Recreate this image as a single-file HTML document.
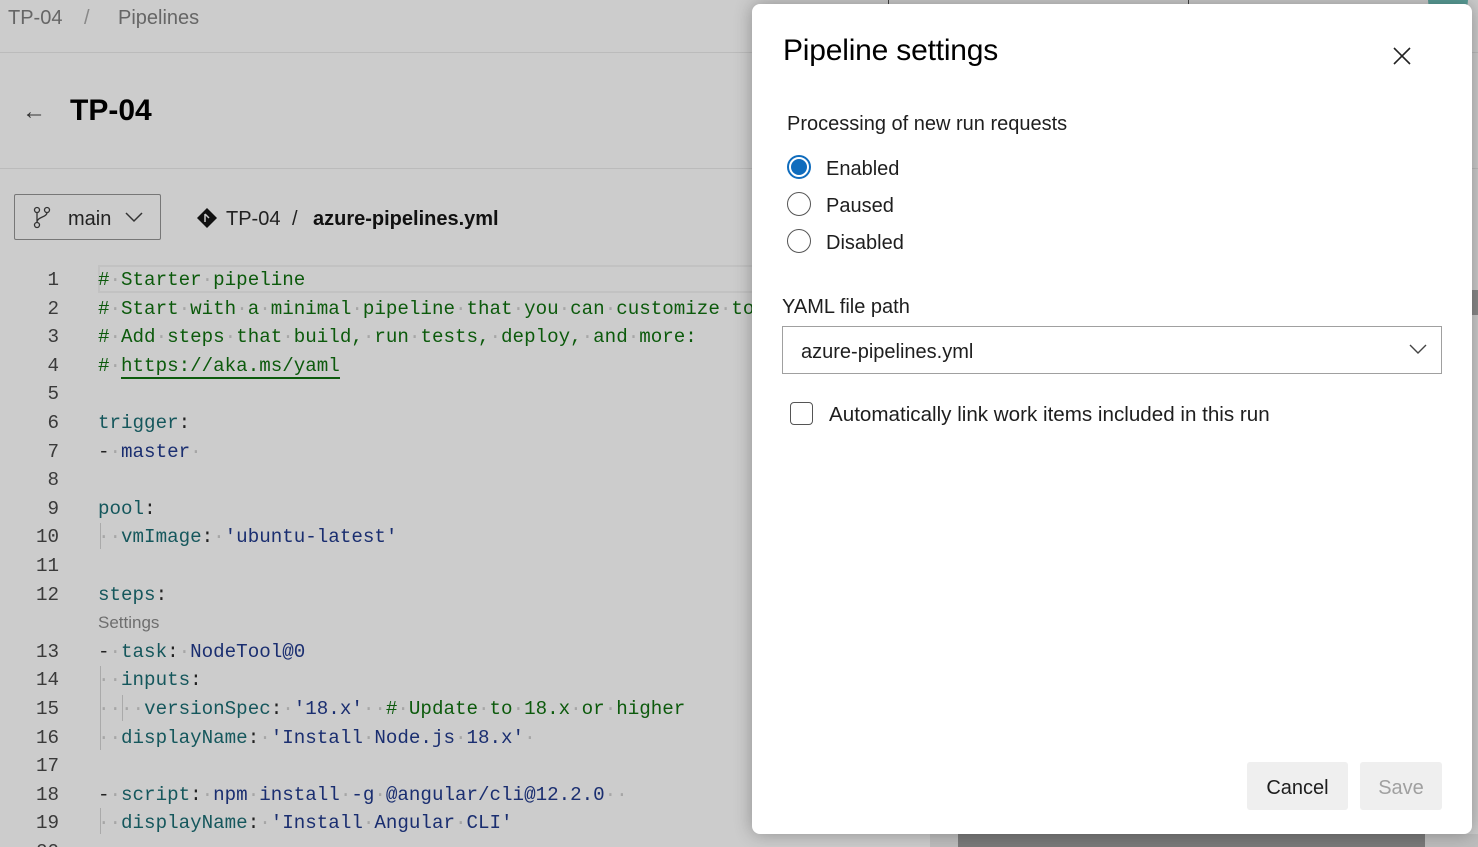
<!DOCTYPE html>
<html><head><meta charset="utf-8"><style>
*{margin:0;padding:0;box-sizing:border-box}
html,body{width:1478px;height:847px;overflow:hidden}
body{background:#cccccc;position:relative;font-family:"Liberation Sans",sans-serif;color:#1e1e1e}
.a{position:absolute;white-space:pre}
.code{position:absolute;left:0;top:266px;font-family:"Liberation Mono",monospace;font-size:19.2px;line-height:28.6px}
.ln{position:absolute;left:0;width:59px;text-align:right;color:#3a3a3a}
.tx{position:absolute;left:98px;white-space:pre}
.c{color:#0c5a0c}.k{color:#15575c}.s{color:#1a2e70}.d{color:#a6a6a6}.p{color:#222}
.g{position:absolute;width:1px;background:#aaa}
.dlg{position:absolute;left:752px;top:4px;width:720px;height:830px;background:#fff;border-radius:8px;box-shadow:0 0 18px rgba(0,0,0,.3)}
.radio{position:absolute;width:24px;height:24px;border-radius:50%;border:1.5px solid #555;background:#fff}
</style></head><body>
<div class="a" style="left:8px;top:7px;font-size:20px;color:#666">TP-04</div>
<div class="a" style="left:84px;top:7px;font-size:20px;color:#888">/</div>
<div class="a" style="left:118px;top:7px;font-size:20px;color:#666">Pipelines</div>
<div style="position:absolute;left:0;top:52px;width:1478px;height:1px;background:#bbb"></div>
<div class="a" style="left:22px;top:98px;font-size:24px;color:#333">←</div>
<div class="a" style="left:70px;top:94px;font-size:30px;font-weight:bold;color:#000">TP-04</div>
<div style="position:absolute;left:0;top:168px;width:1478px;height:1px;background:#bbb"></div>
<div style="position:absolute;left:888px;top:0;width:1px;height:10px;background:#444"></div>
<div style="position:absolute;left:1188px;top:0;width:1px;height:10px;background:#444"></div>
<div style="position:absolute;left:1428px;top:-20px;width:40px;height:40px;border-radius:50%;background:#5a9e98"></div>
<div style="position:absolute;left:14px;top:194px;width:147px;height:46px;border:1px solid #777;border-radius:2px"></div>
<svg class="a" style="left:32px;top:206px" width="22" height="24" viewBox="0 0 22 24" fill="none" stroke="#333" stroke-width="1.3"><circle cx="5" cy="4" r="2.5"/><circle cx="15" cy="4" r="2.5"/><circle cx="5" cy="19" r="2.5"/><path d="M5 6.5v10M15 6.5c0 5-10 4-10 10"/></svg>
<div class="a" style="left:68px;top:208px;font-size:20px;color:#222">main</div>
<svg class="a" style="left:124px;top:210px" width="20" height="14" viewBox="0 0 20 14" fill="none" stroke="#333" stroke-width="1.5"><path d="M2 3l8 8 8-8"/></svg>
<svg class="a" style="left:196px;top:207px" width="22" height="22" viewBox="0 0 22 22"><path d="M11 1l10 10-10 10L1 11z" fill="#111"/><path d="M9 7v8M9 7l4 4" stroke="#ccc" stroke-width="1.5"/></svg>
<div class="a" style="left:226px;top:208px;font-size:20px;color:#222">TP-04</div>
<div class="a" style="left:292px;top:208px;font-size:20px;color:#222">/</div>
<div class="a" style="left:313px;top:208px;font-size:20px;color:#111;font-weight:bold">azure-pipelines.yml</div>
<div style="position:absolute;left:98px;top:265px;width:660px;height:28px;border:2px solid #c2c2c2"></div>
<div class="code">
<div style="position:relative;height:580px">
<div class="ln" style="top:0">1</div><div class="tx c" style="top:0">#<span class="d">·</span>Starter<span class="d">·</span>pipeline</div>
<div class="ln" style="top:28.6px">2</div><div class="tx c" style="top:28.6px">#<span class="d">·</span>Start<span class="d">·</span>with<span class="d">·</span>a<span class="d">·</span>minimal<span class="d">·</span>pipeline<span class="d">·</span>that<span class="d">·</span>you<span class="d">·</span>can<span class="d">·</span>customize<span class="d">·</span>to</div>
<div class="ln" style="top:57.2px">3</div><div class="tx c" style="top:57.2px">#<span class="d">·</span>Add<span class="d">·</span>steps<span class="d">·</span>that<span class="d">·</span>build,<span class="d">·</span>run<span class="d">·</span>tests,<span class="d">·</span>deploy,<span class="d">·</span>and<span class="d">·</span>more:</div>
<div class="ln" style="top:85.8px">4</div><div class="tx c" style="top:85.8px">#<span class="d">·</span><span style="border-bottom:2px solid #0c5a0c">https://aka.ms/yaml</span></div>
<div class="ln" style="top:114.4px">5</div>
<div class="ln" style="top:143px">6</div><div class="tx" style="top:143px"><span class="k">trigger</span><span class="p">:</span></div>
<div class="ln" style="top:171.6px">7</div><div class="tx" style="top:171.6px"><span class="p">-</span><span class="d">·</span><span class="s">master</span><span class="d">·</span></div>
<div class="ln" style="top:200.2px">8</div>
<div class="ln" style="top:228.8px">9</div><div class="tx" style="top:228.8px"><span class="k">pool</span><span class="p">:</span></div>
<div class="ln" style="top:257.4px">10</div><div class="tx" style="top:257.4px"><span class="d">··</span><span class="k">vmImage</span><span class="p">:</span><span class="d">·</span><span class="s">'ubuntu-latest'</span></div>
<div class="ln" style="top:286px">11</div>
<div class="ln" style="top:314.6px">12</div><div class="tx" style="top:314.6px"><span class="k">steps</span><span class="p">:</span></div>
<div class="tx" style="top:343.2px;font-family:'Liberation Sans',sans-serif;font-size:17px;color:#6e6e6e">Settings</div>
<div class="ln" style="top:371.8px">13</div><div class="tx" style="top:371.8px"><span class="p">-</span><span class="d">·</span><span class="k">task</span><span class="p">:</span><span class="d">·</span><span class="s">NodeTool@0</span></div>
<div class="ln" style="top:400.4px">14</div><div class="tx" style="top:400.4px"><span class="d">··</span><span class="k">inputs</span><span class="p">:</span></div>
<div class="ln" style="top:429px">15</div><div class="tx" style="top:429px"><span class="d">····</span><span class="k">versionSpec</span><span class="p">:</span><span class="d">·</span><span class="s">'18.x'</span><span class="d">··</span><span class="c">#<span class="d">·</span>Update<span class="d">·</span>to<span class="d">·</span>18.x<span class="d">·</span>or<span class="d">·</span>higher</span></div>
<div class="ln" style="top:457.6px">16</div><div class="tx" style="top:457.6px"><span class="d">··</span><span class="k">displayName</span><span class="p">:</span><span class="d">·</span><span class="s">'Install<span class="d">·</span>Node.js<span class="d">·</span>18.x'</span><span class="d">·</span></div>
<div class="ln" style="top:486.2px">17</div>
<div class="ln" style="top:514.8px">18</div><div class="tx" style="top:514.8px"><span class="p">-</span><span class="d">·</span><span class="k">script</span><span class="p">:</span><span class="d">·</span><span class="s">npm<span class="d">·</span>install<span class="d">·</span>-g<span class="d">·</span>@angular/cli@12.2.0</span><span class="d">··</span></div>
<div class="ln" style="top:543.4px">19</div><div class="tx" style="top:543.4px"><span class="d">··</span><span class="k">displayName</span><span class="p">:</span><span class="d">·</span><span class="s">'Install<span class="d">·</span>Angular<span class="d">·</span>CLI'</span></div>
<div class="ln" style="top:572px">20</div>
</div></div>
<div class="g" style="left:100px;top:523px;height:26px"></div>
<div class="g" style="left:100px;top:666px;height:84px"></div>
<div class="g" style="left:122px;top:695px;height:26px"></div>
<div class="g" style="left:100px;top:808px;height:26px"></div>
<div style="position:absolute;left:930px;top:834px;width:548px;height:13px;background:#bdbdbd"></div>
<div style="position:absolute;left:958px;top:834px;width:467px;height:13px;background:#7a7a7a"></div>
<div style="position:absolute;left:1472px;top:290px;width:6px;height:25px;background:#8a8a8a"></div>
<div class="dlg">
<div class="a" style="left:31px;top:30px;font-size:30px;color:#000;letter-spacing:-0.2px">Pipeline settings</div>
<svg class="a" style="left:640px;top:42px" width="20" height="20" viewBox="0 0 20 20" stroke="#222" stroke-width="1.6"><path d="M2 2l16 16M18 2L2 18"/></svg>
<div class="a" style="left:35px;top:109px;font-size:20px">Processing of new run requests</div>
<div class="radio" style="left:35px;top:151px;border:2px solid #0f6cbd"><div style="position:absolute;left:2px;top:2px;width:16px;height:16px;border-radius:50%;background:#0f6cbd"></div></div>
<div class="a" style="left:74px;top:154px;font-size:20px">Enabled</div>
<div class="radio" style="left:35px;top:188px"></div>
<div class="a" style="left:74px;top:191px;font-size:20px">Paused</div>
<div class="radio" style="left:35px;top:225px"></div>
<div class="a" style="left:74px;top:228px;font-size:20px">Disabled</div>
<div class="a" style="left:30px;top:292px;font-size:20px">YAML file path</div>
<div style="position:absolute;left:30px;top:322px;width:660px;height:48px;border:1px solid #a0a0a0"></div>
<div class="a" style="left:49px;top:337px;font-size:20px">azure-pipelines.yml</div>
<svg class="a" style="left:656px;top:338px" width="20" height="14" viewBox="0 0 20 14" fill="none" stroke="#444" stroke-width="1.4"><path d="M2 3l8 8 8-8"/></svg>
<div style="position:absolute;left:38px;top:398px;width:23px;height:23px;border:1.5px solid #555;border-radius:4px"></div>
<div class="a" style="left:77px;top:399px;font-size:20.6px">Automatically link work items included in this run</div>
<div style="position:absolute;left:495px;top:758px;width:101px;height:48px;background:#efefef;border-radius:3px;font-size:20px;text-align:center;line-height:52px;color:#1e1e1e">Cancel</div>
<div style="position:absolute;left:608px;top:758px;width:82px;height:48px;background:#efefef;border-radius:3px;font-size:20px;text-align:center;line-height:52px;color:#a0a0a0">Save</div>
</div>
</body></html>
